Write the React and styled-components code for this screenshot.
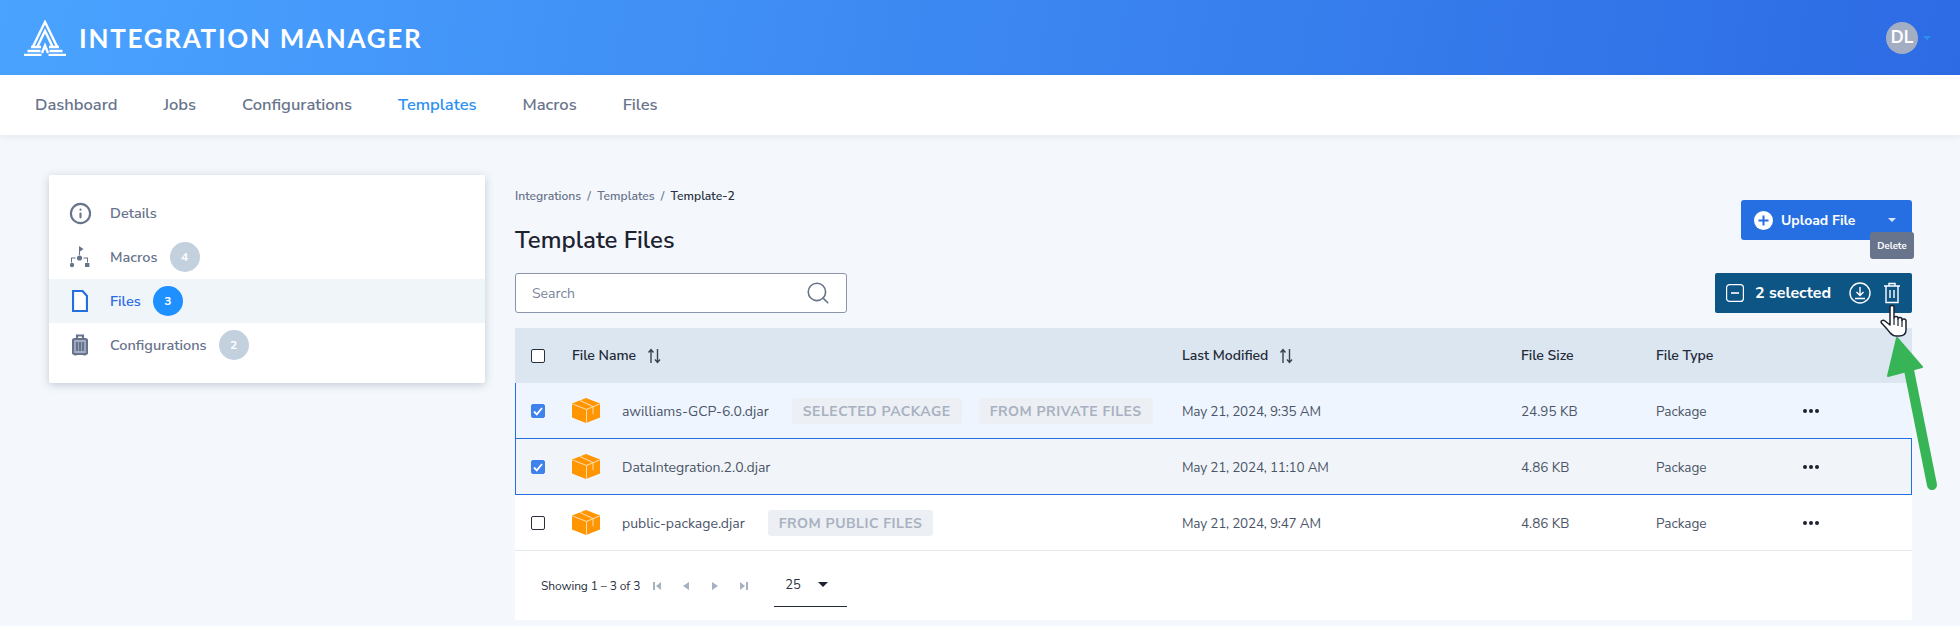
import styled, { createGlobalStyle } from "styled-components";
import { LuInfo, LuSearch } from "react-icons/lu";

const GlobalStyle = createGlobalStyle`
  * { box-sizing: border-box; }
  html, body { margin: 0; padding: 0; background: #f4f8fc; }
  body { font-family: "Nunito Sans", "Noto Sans", "Open Sans", sans-serif; overflow: hidden; }
`;

const Page = styled.div`
  width: 1960px;
  height: 626px;
  overflow: hidden;
  position: relative;
`;

const Header = styled.header`
  height: 75px;
  background: linear-gradient(100deg, #4aa3ff 0%, #2d6be4 100%);
  display: flex;
  align-items: center;
  justify-content: space-between;
  padding: 0 29px 0 24px;
`;

const Brand = styled.div`
  display: flex;
  align-items: center;
  gap: 13px;
  color: #fff;
  font-family: "Lato", sans-serif;
  font-size: 26px;
  font-weight: 700;
  letter-spacing: 1.7px;
`;

const UserMenu = styled.div`
  display: flex;
  align-items: center;
  gap: 5px;
`;

const Avatar = styled.div`
  width: 32px;
  height: 32px;
  border-radius: 50%;
  background: #a3aec4;
  color: #fff;
  font-size: 17px;
  font-weight: 700;
  display: flex;
  align-items: center;
  justify-content: center;
`;

const Caret = styled.span`
  width: 0;
  height: 0;
  flex: none;
  border-left: ${(p) => p.$size || 4}px solid transparent;
  border-right: ${(p) => p.$size || 4}px solid transparent;
  border-top: ${(p) => p.$size || 4}px solid ${(p) => p.$color};
`;

const Nav = styled.nav`
  height: 60px;
  background: #fff;
  display: flex;
  align-items: center;
  gap: 46px;
  padding: 0 35px 2px;
  box-shadow: 0 2px 6px rgba(60, 80, 110, 0.08);
`;

const NavLink = styled.a`
  font-size: 16.5px;
  font-weight: 600;
  color: ${(p) => (p.$active ? "#2b8ff0" : "#68738c")};
`;

const Content = styled.main`
  display: flex;
  align-items: flex-start;
  padding: 40px 0 0 49px;
  gap: 30px;
`;

const SideCard = styled.aside`
  width: 436px;
  height: 208px;
  background: #fff;
  border-radius: 2px;
  box-shadow: 0 2px 8px rgba(50, 70, 100, 0.25);
  padding: 16px 0;
  flex: none;
`;

const SideItem = styled.div`
  height: 44px;
  display: flex;
  align-items: center;
  padding-left: 19px;
  background: ${(p) => (p.$active ? "#f0f5f9" : "transparent")};
  color: ${(p) => (p.$active ? "#2d6be4" : "#68738c")};
  font-size: 14.5px;
  font-weight: 600;
`;

const SideIcon = styled.span`
  width: 24px;
  height: 24px;
  margin-right: 18px;
  display: flex;
  align-items: center;
  justify-content: center;
  flex: none;
  font-size: 23px;
  svg { stroke-width: 2.2; }
`;

const Count = styled.span`
  width: 30px;
  height: 30px;
  margin-left: 12px;
  border-radius: 50%;
  background: ${(p) => (p.$active ? "#1e90ff" : "#c3d0de")};
  color: #fff;
  font-size: 12px;
  font-weight: 700;
  display: flex;
  align-items: center;
  justify-content: center;
`;

const Main = styled.section`
  width: 1397px;
  flex: none;
`;

const TopRow = styled.div`
  display: flex;
  justify-content: space-between;
  align-items: flex-start;
`;

const TitleBlock = styled.div`
  display: flex;
  flex-direction: column;
`;

const Crumbs = styled.div`
  font-size: 12.1px;
  font-weight: 600;
  line-height: 16px;
  margin-top: 13px;
  color: #68738c;
  word-spacing: 3px;
`;

const CrumbNow = styled.span`
  color: #2a3142;
`;

const Title = styled.h1`
  margin: 21px 0 0;
  font-size: 24px;
  font-weight: 600;
  line-height: 30px;
  color: #1c2230;
`;

const SearchBox = styled.div`
  width: 332px;
  height: 40px;
  margin-top: 18px;
  border: 1px solid #8a94ab;
  border-radius: 3px;
  background: #fff;
  display: flex;
  align-items: center;
  justify-content: space-between;
  padding: 0 15px 0 16px;
  color: #7a8499;
  font-size: 14px;
  svg { font-size: 26px; color: #68738c; stroke-width: 1.5; }
`;

const Actions = styled.div`
  display: flex;
  flex-direction: column;
  align-items: flex-end;
  position: relative;
  margin-top: 25px;
`;

const UploadButton = styled.div`
  width: 171px;
  height: 40px;
  border-radius: 3px;
  background: #256fe3;
  color: #fff;
  font-size: 14px;
  font-weight: 700;
  display: flex;
  align-items: center;
  padding-left: 13px;
  gap: 8px;
`;

const UploadCaret = styled.span`
  margin-left: 25px;
  display: flex;
`;

const Tooltip = styled.div`
  position: absolute;
  top: 32px;
  right: -2px;
  width: 44px;
  height: 27px;
  border-radius: 3px;
  background: #68738c;
  color: #fff;
  font-size: 9.5px;
  font-weight: 700;
  display: flex;
  align-items: center;
  justify-content: center;
`;

const SelectionBar = styled.div`
  width: 197px;
  height: 40px;
  margin-top: 33px;
  border-radius: 2px;
  background: #0c5585;
  color: #fff;
  font-size: 16px;
  font-weight: 700;
  display: flex;
  align-items: center;
  padding-left: 11px;
  svg { flex: none; }
`;

const SelectedLabel = styled.span`
  margin-left: 11px;
  margin-right: 17px;
  width: 77px;
  white-space: nowrap;
`;

const BarActions = styled.span`
  display: flex;
  align-items: center;
  gap: 12px;
`;

const Table = styled.div`
  margin-top: 15px;
  background: #fff;
`;

const columns = "57px 610px 339px 135px 147px 1fr";

const HeadRow = styled.div`
  display: grid;
  grid-template-columns: ${columns};
  align-items: center;
  height: 55px;
  background: #dbe6f1;
  color: #232a38;
  font-size: 14px;
  font-weight: 600;
`;

const Row = styled.div`
  display: grid;
  grid-template-columns: ${columns};
  align-items: center;
  height: 56px;
  color: #4c5568;
  font-size: 13.5px;
  background: ${(p) => p.$bg};
  border-bottom: 1px solid ${(p) => p.$line};
  box-shadow: ${(p) => (p.$selected ? "inset 1px 0 0 #256fe3" : "none")}${(p) => (p.$outlined ? ", inset -1px 0 0 #256fe3" : "")};
`;

const CheckCell = styled.div`
  padding-left: 16px;
  display: flex;
`;

const Check = styled.span`
  width: 14px;
  height: 14px;
  border-radius: 2px;
  border: 1px solid ${(p) => (p.$on ? "#3f83ea" : "#2a2f3a")};
  background: ${(p) => (p.$on ? "#3f83ea" : "#fff")};
  display: flex;
  align-items: center;
  justify-content: center;
`;

const HeadCell = styled.div`
  display: flex;
  align-items: center;
  gap: 11px;
`;

const NameCell = styled.div`
  display: flex;
  align-items: center;
`;

const FileName = styled.span`
  margin-left: 22px;
  margin-right: 23px;
  padding-top: 2px;
  font-size: 14px;
  white-space: nowrap;
`;

const TextCell = styled.div`
  padding-top: 2px;
`;

const DateCell = styled(TextCell)`
  letter-spacing: -0.2px;
`;

const Tag = styled.span`
  height: 26px;
  margin-right: 17px;
  padding: 1px 11px 0;
  border-radius: 3px;
  background: #eceff3;
  color: #a8b1c1;
  font-size: 14px;
  font-weight: 700;
  letter-spacing: 0.5px;
  display: flex;
  align-items: center;
  white-space: nowrap;
`;

const More = styled.span`
  display: flex;
  gap: 2px;
`;

const Dot = styled.i`
  width: 4px;
  height: 4px;
  border-radius: 50%;
  background: #1c2230;
`;

const Footer = styled.div`
  height: 69px;
  display: flex;
  align-items: center;
  padding: 1px 26px 0;
  color: #2a3142;
  font-size: 12px;
  letter-spacing: -0.1px;
`;

const Pager = styled.div`
  display: flex;
  align-items: center;
  gap: 19px;
  margin-left: 12px;
`;

const PageSize = styled.div`
  width: 73px;
  height: 42px;
  margin-left: 25px;
  border-bottom: 1px solid #232a38;
  display: flex;
  align-items: center;
  justify-content: space-between;
  padding: 0 19px 2px 11px;
  font-size: 13px;
`;

const Overlay = styled.svg`
  position: absolute;
  left: 1870px;
  top: 300px;
  pointer-events: none;
`;

const Logo = () => (
  <svg width="42" height="36" viewBox="0 0 42 36" fill="none" stroke="#fff" strokeWidth="2.4">
    <path d="M9 26.5L21 2l12 24.5" />
    <path d="M13.5 26.5L21 11l7.5 15.5" />
    <path d="M18 33L21 25.5 24 33" />
    <path d="M7 27h10M25 27h10M3.5 31h13M25.5 31h13M0 35h17.5M24.5 35H42" />
  </svg>
);

const MacroIcon = () => (
  <svg width="22" height="22" viewBox="0 0 22 22" fill="#68738c">
    <path d="M10 0l4.5 3L11 5.5V9h-1z" />
    <circle cx="10.5" cy="12" r="2.6" />
    <path d="M2 16.5v-5h4.5v1H3v4zM19 16.5v-5h-4.5v1H18v4z" />
    <circle cx="3" cy="19" r="2.2" />
    <rect x="16" y="17" width="4.4" height="4" />
  </svg>
);

const FileIcon = () => (
  <svg width="16" height="22" viewBox="0 0 16 22" fill="#fff" stroke="#256fe3" strokeWidth="1.5">
    <path d="M1 1h9.5L15 6v15H1z" />
  </svg>
);

const LuggageIcon = () => (
  <svg width="16" height="22" viewBox="0 0 16 22" fill="none" stroke="#68738c" strokeWidth="1.6">
    <rect x="1" y="5" width="14" height="15" rx="1.5" fill="#a3aec4" />
    <path d="M5 5V1.5h6V5M5 8v9M8 8v9M11 8v9M3.5 20v1.5M12.5 20v1.5" />
  </svg>
);

const PackageIcon = () => (
  <svg width="28" height="25" viewBox="0 0 28 25">
    <path d="M14 0l14 5.5v14L14 25 0 19.5v-14z" fill="#ff9500" />
    <path d="M0.5 6L14.5 11.5 27.5 6M14.5 11.5V25" fill="none" stroke="#ffd9a8" strokeWidth="1.1" />
    <path d="M8 2.5L21 8.5v7.5" fill="none" stroke="#ffd9a8" strokeWidth="1.1" />
  </svg>
);

const SortIcon = () => (
  <svg width="15" height="16" viewBox="0 0 15 16" fill="none" stroke="#3a4252" strokeWidth="1.4">
    <path d="M4 15V2M1.5 4.5L4 1.5l2.500 3M10.500 1v13M8 11.500l2.500 3 2.500-3" />
  </svg>
);

const CheckMark = () => (
  <svg width="12" height="12" viewBox="0 0 12 12" fill="none" stroke="#fff" strokeWidth="1.8">
    <path d="M2 6.5l2.8 2.8L10 3" />
  </svg>
);

const PagerIcon = ({ d }) => (
  <svg width="10" height="10" viewBox="0 0 10 10" fill="#a8b1c1">
    <path d={d} />
  </svg>
);

const CircleDownload = () => (
  <svg width="22" height="22" viewBox="0 0 22 22" fill="none" stroke="#fff" strokeWidth="1.4">
    <circle cx="11" cy="11" r="10" />
    <path d="M11 5v8M7.5 10l3.5 3.5 3.5-3.5M6 16.5h10" />
  </svg>
);

const TrashIcon = () => (
  <svg width="18" height="22" viewBox="0 0 18 22" fill="none" stroke="#fff" strokeWidth="1.4">
    <path d="M1 4h16M6 4V1.5h6V4M3 4v16.5h12V4M7 8v8M11 8v8" />
  </svg>
);

const MinusBox = () => (
  <svg width="18" height="18" viewBox="0 0 18 18" fill="none" stroke="#fff" strokeWidth="1.2">
    <rect x="0.6" y="0.6" width="16.8" height="16.8" rx="3" />
    <path d="M5 9h8" strokeWidth="1.6" />
  </svg>
);

const PlusCircle = () => (
  <svg width="19" height="19" viewBox="0 0 19 19">
    <circle cx="9.5" cy="9.5" r="9.5" fill="#fff" />
    <path d="M9.5 4.5v10M4.5 9.5h10" stroke="#256fe3" strokeWidth="2" />
  </svg>
);

const Pointer = () => (
  <Overlay width="80" height="200" viewBox="0 0 80 200">
    <path d="M27 38L52 67 18 76z" fill="#37b556" stroke="#37b556" strokeWidth="2" strokeLinejoin="round" />
    <path d="M39 70L62 185" fill="none" stroke="#37b556" strokeWidth="10" strokeLinecap="round" />
    <path
      d="M20 7C20 5 24 5 24 7L24 18C24 16 28 16 28 18L28 19C28 17 32 17 32 19.5L32 20.5C32 18.5 36 18.5 36 21L36 30C36 34 33 36 29 36L26 36C22 36 20 33 17 29L11.5 23C10 21 13 19.5 15 21L20 25Z"
      fill="#fff"
      stroke="#1c2230"
      strokeWidth="1.5"
      strokeLinejoin="round"
    />
    <path d="M24 18v7M28 19v7M32 20v7" fill="none" stroke="#1c2230" strokeWidth="1.2" />
  </Overlay>
);

const files = [
  { name: "awilliams-GCP-6.0.djar", date: "May 21, 2024, 9:35 AM", size: "24.95 KB", on: true, bg: "#eef5fe", line: "#256fe3", tags: ["SELECTED PACKAGE", "FROM PRIVATE FILES"] },
  { name: "DataIntegration.2.0.djar", date: "May 21, 2024, 11:10 AM", size: "4.86 KB", on: true, outlined: true, bg: "#f1f5f9", line: "#256fe3", tags: [] },
  { name: "public-package.djar", date: "May 21, 2024, 9:47 AM", size: "4.86 KB", on: false, bg: "#fff", line: "#e4e7eb", tags: ["FROM PUBLIC FILES"] },
];

const App = () => (
  <Page>
    <GlobalStyle />
    <Header>
      <Brand>
        <Logo />
        INTEGRATION MANAGER
      </Brand>
      <UserMenu>
        <Avatar>DL</Avatar>
        <Caret $color="#2b8ff0" />
      </UserMenu>
    </Header>
    <Nav>
      <NavLink>Dashboard</NavLink>
      <NavLink>Jobs</NavLink>
      <NavLink>Configurations</NavLink>
      <NavLink $active>Templates</NavLink>
      <NavLink>Macros</NavLink>
      <NavLink>Files</NavLink>
    </Nav>
    <Content>
      <SideCard>
        <SideItem>
          <SideIcon><LuInfo color="#68738c" /></SideIcon>
          Details
        </SideItem>
        <SideItem>
          <SideIcon><MacroIcon /></SideIcon>
          Macros
          <Count>4</Count>
        </SideItem>
        <SideItem $active>
          <SideIcon><FileIcon /></SideIcon>
          Files
          <Count $active>3</Count>
        </SideItem>
        <SideItem>
          <SideIcon><LuggageIcon /></SideIcon>
          Configurations
          <Count>2</Count>
        </SideItem>
      </SideCard>
      <Main>
        <TopRow>
          <TitleBlock>
            <Crumbs>
              Integrations / Templates / <CrumbNow>Template-2</CrumbNow>
            </Crumbs>
            <Title>Template Files</Title>
            <SearchBox>
              Search
              <LuSearch />
            </SearchBox>
          </TitleBlock>
          <Actions>
            <UploadButton>
              <PlusCircle />
              Upload File
              <UploadCaret><Caret $color="#dbe6f7" /></UploadCaret>
            </UploadButton>
            <Tooltip>Delete</Tooltip>
            <SelectionBar>
              <MinusBox />
              <SelectedLabel>2 selected</SelectedLabel>
              <BarActions>
                <CircleDownload />
                <TrashIcon />
              </BarActions>
            </SelectionBar>
          </Actions>
        </TopRow>
        <Table>
          <HeadRow>
            <CheckCell><Check /></CheckCell>
            <HeadCell>File Name <SortIcon /></HeadCell>
            <HeadCell>Last Modified <SortIcon /></HeadCell>
            <HeadCell>File Size</HeadCell>
            <HeadCell>File Type</HeadCell>
            <div />
          </HeadRow>
          {files.map((f) => (
            <Row key={f.name} $bg={f.bg} $line={f.line} $selected={f.on} $outlined={f.outlined}>
              <CheckCell><Check $on={f.on}>{f.on && <CheckMark />}</Check></CheckCell>
              <NameCell>
                <PackageIcon />
                <FileName>{f.name}</FileName>
                {f.tags.map((t) => <Tag key={t}>{t}</Tag>)}
              </NameCell>
              <DateCell>{f.date}</DateCell>
              <TextCell>{f.size}</TextCell>
              <TextCell>Package</TextCell>
              <More><Dot /><Dot /><Dot /></More>
            </Row>
          ))}
          <Footer>
            Showing 1 – 3 of 3
            <Pager>
              <PagerIcon d="M1 1h2v8H1zM9 1v8L4 5z" />
              <PagerIcon d="M8 1v8L2 5z" />
              <PagerIcon d="M2 1v8l6-4z" />
              <PagerIcon d="M1 1v8l5-4zM7 1h2v8H7z" />
            </Pager>
            <PageSize>
              25
              <Caret $color="#1c2230" $size={5} />
            </PageSize>
          </Footer>
        </Table>
      </Main>
    </Content>
    <Pointer />
  </Page>
);

export default App;
